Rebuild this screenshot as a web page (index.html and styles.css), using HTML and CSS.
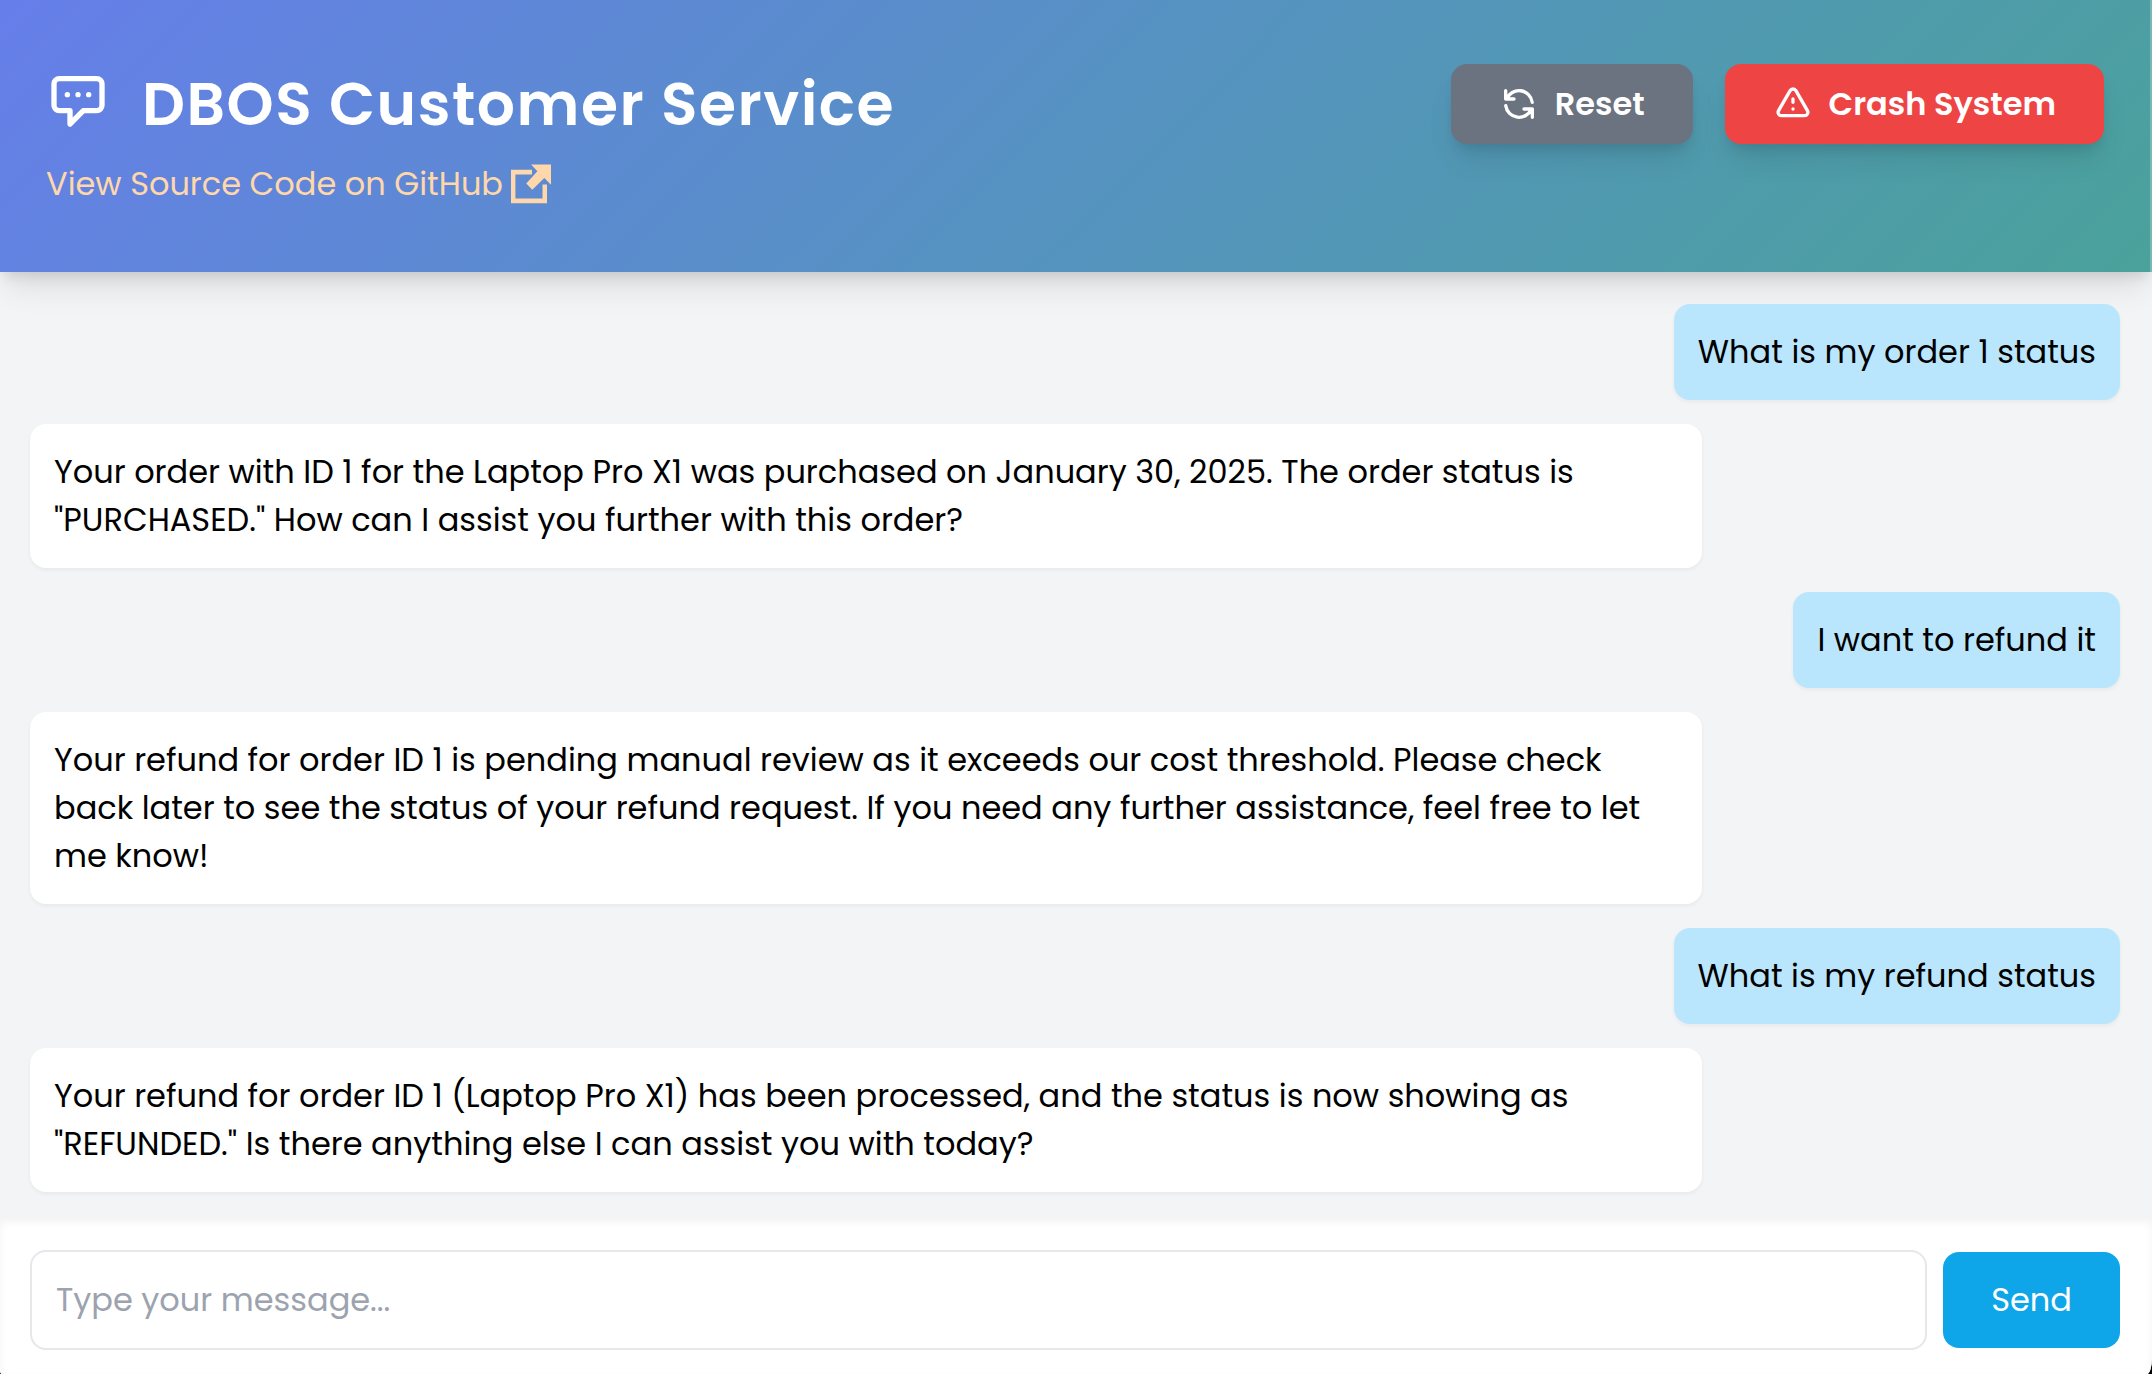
FILE: index.html
```html
<!DOCTYPE html>
<html lang="en">
<head>
<meta charset="utf-8">
<title>DBOS Customer Service</title>
<link rel="stylesheet" href="styles.css">
</head>
<body>
<div class="app">
  <header class="header">
    <div class="brand">
      <div class="brand-row">
        <svg class="icon icon-chat" viewBox="0 0 24 24"><path d="M8 10h.01M12 10h.01M16 10h.01M9 16H5a2 2 0 01-2-2V6a2 2 0 012-2h14a2 2 0 012 2v8a2 2 0 01-2 2h-5l-5 5v-5z"/></svg>
        <h1 class="title">DBOS Customer Service</h1>
      </div>
      <a class="source-link" href="#">View Source Code on GitHub
        <svg class="icon-external" viewBox="0 0 40 40"><path d="M21 5.7H0V39.2H36V20.5H31.5V34.5H4.4V10.4H21zM20 .5H40V20.8L33.3 14.1 21.3 25.7 15.2 19.4 26.4 7.2z"/></svg>
      </a>
    </div>
    <div class="actions">
      <button class="action action-reset">
        <svg class="icon" viewBox="0 0 24 24"><path d="M4 4v5h.582m15.356 2A8.001 8.001 0 004.582 9m0 0H9m11 11v-5h-.581m0 0a8.003 8.003 0 01-15.357-2m15.357 2H15"/></svg>
        <span>Reset</span>
      </button>
      <button class="action action-crash">
        <svg class="icon" viewBox="0 0 24 24"><path d="M12 9v2m0 4h.01m-6.938 4h13.856c1.54 0 2.502-1.667 1.732-3L13.732 4c-.77-1.333-2.694-1.333-3.464 0L3.34 16c-.77 1.333.192 3 1.732 3z"/></svg>
        <span>Crash System</span>
      </button>
    </div>
  </header>
  <main class="messages">
    <div class="bubble user">What is my order 1 status</div>
    <div class="bubble bot">Your order with ID 1 for the Laptop Pro X1 was purchased on January 30, 2025. The order status is "PURCHASED." How can I assist you further with this order?</div>
    <div class="bubble user">I want to refund it</div>
    <div class="bubble bot">Your refund for order ID 1 is pending manual review as it exceeds our cost threshold. Please check back later to see the status of your refund request. If you need any further assistance, feel free to let me know!</div>
    <div class="bubble user">What is my refund status</div>
    <div class="bubble bot">Your refund for order ID 1 (Laptop Pro X1) has been processed, and the status is now showing as "REFUNDED." Is there anything else I can assist you with today?</div>
  </main>
  <form class="composer">
    <input class="field" type="text" placeholder="Type your message...">
    <button class="send" type="button">Send</button>
  </form>
</div>
</body>
</html>
```
FILE: styles.css
```css
* { box-sizing: border-box; }
html { background: #000; overflow: hidden; }
body {
  margin: 0;
  font-family: Poppins, "Open Sans", sans-serif;
  font-size: 32px;
  line-height: 48px;
  color: #000;
}
button, input { font: inherit; border: 0; margin: 0; }
.app {
  height: 1374px;
  display: flex;
  flex-direction: column;
  background: #f3f4f6;
  border-radius: 0 0 5px 2px / 0 0 16px 4px;
  overflow: hidden;
}
.header {
  flex: none;
  height: 272px;
  border-right: 2px solid rgba(255,255,255,.25);
  padding: 64px 46px 0;
  display: flex;
  justify-content: space-between;
  align-items: flex-start;
  background: linear-gradient(135deg, #667eea 0%, #5692c2 50%, #4aa29b 100%) border-box;
  box-shadow: 0 20px 30px -6px rgba(0,0,0,.1), 0 8px 12px -4px rgba(0,0,0,.1);
}
.brand-row { display: flex; height: 80px; align-items: flex-start; }
.icon {
  width: 40px;
  height: 40px;
  flex: none;
  fill: none;
  stroke: currentColor;
  stroke-width: 2;
  stroke-linecap: round;
  stroke-linejoin: round;
}
.icon-chat { width: 64px; height: 64px; margin-top: 4px; color: #fff; }
.title {
  margin: 0 0 0 32px;
  color: #fff;
  font-size: 60px;
  font-weight: 600;
  letter-spacing: 1.5px;
  line-height: 80px;
  white-space: nowrap;
}
.source-link {
  display: flex;
  gap: 8px;
  margin-top: 16px;
  color: #fed7aa;
  text-decoration: none;
  white-space: nowrap;
}
.icon-external { width: 40px; height: 40px; margin-top: 4px; fill: currentColor; }
.actions { display: flex; gap: 32px; }
.action {
  height: 80px;
  padding: 0 48px;
  display: flex;
  align-items: center;
  gap: 16px;
  border-radius: 16px;
  color: #fff;
  font-weight: 600;
  white-space: nowrap;
  box-shadow: 0 20px 30px -6px rgba(0,0,0,.1), 0 8px 12px -4px rgba(0,0,0,.1);
}
.action-reset { background: #6b7280; }
.action-crash { background: #ef4444; }
.messages {
  flex: 1;
  padding: 32px 32px 0 30px;
  display: flex;
  flex-direction: column;
  gap: 24px;
}
.bubble {
  padding: 24px;
  border-radius: 16px;
  box-shadow: 0 2px 4px rgba(0,0,0,.05);
}
.user { align-self: flex-end; background: #bae6fd; }
.bot { width: 80%; background: #fff; }
.composer {
  height: 156px;
  padding: 32px 32px 24px 30px;
  display: flex;
  align-items: center;
  gap: 16px;
  background: #fff;
  box-shadow: inset 0 4px 8px rgba(0,0,0,.05);
}
.field {
  flex: 1;
  height: 100px;
  padding: 0 24px;
  border: 2px solid #e5e7eb;
  border-radius: 16px;
  background: #fff;
}
.field::placeholder { color: #9ca3af; opacity: 1; }
.send {
  height: 96px;
  padding: 0 48px;
  border-radius: 16px;
  background: #0ea5e9;
  color: #fff;
}
```
